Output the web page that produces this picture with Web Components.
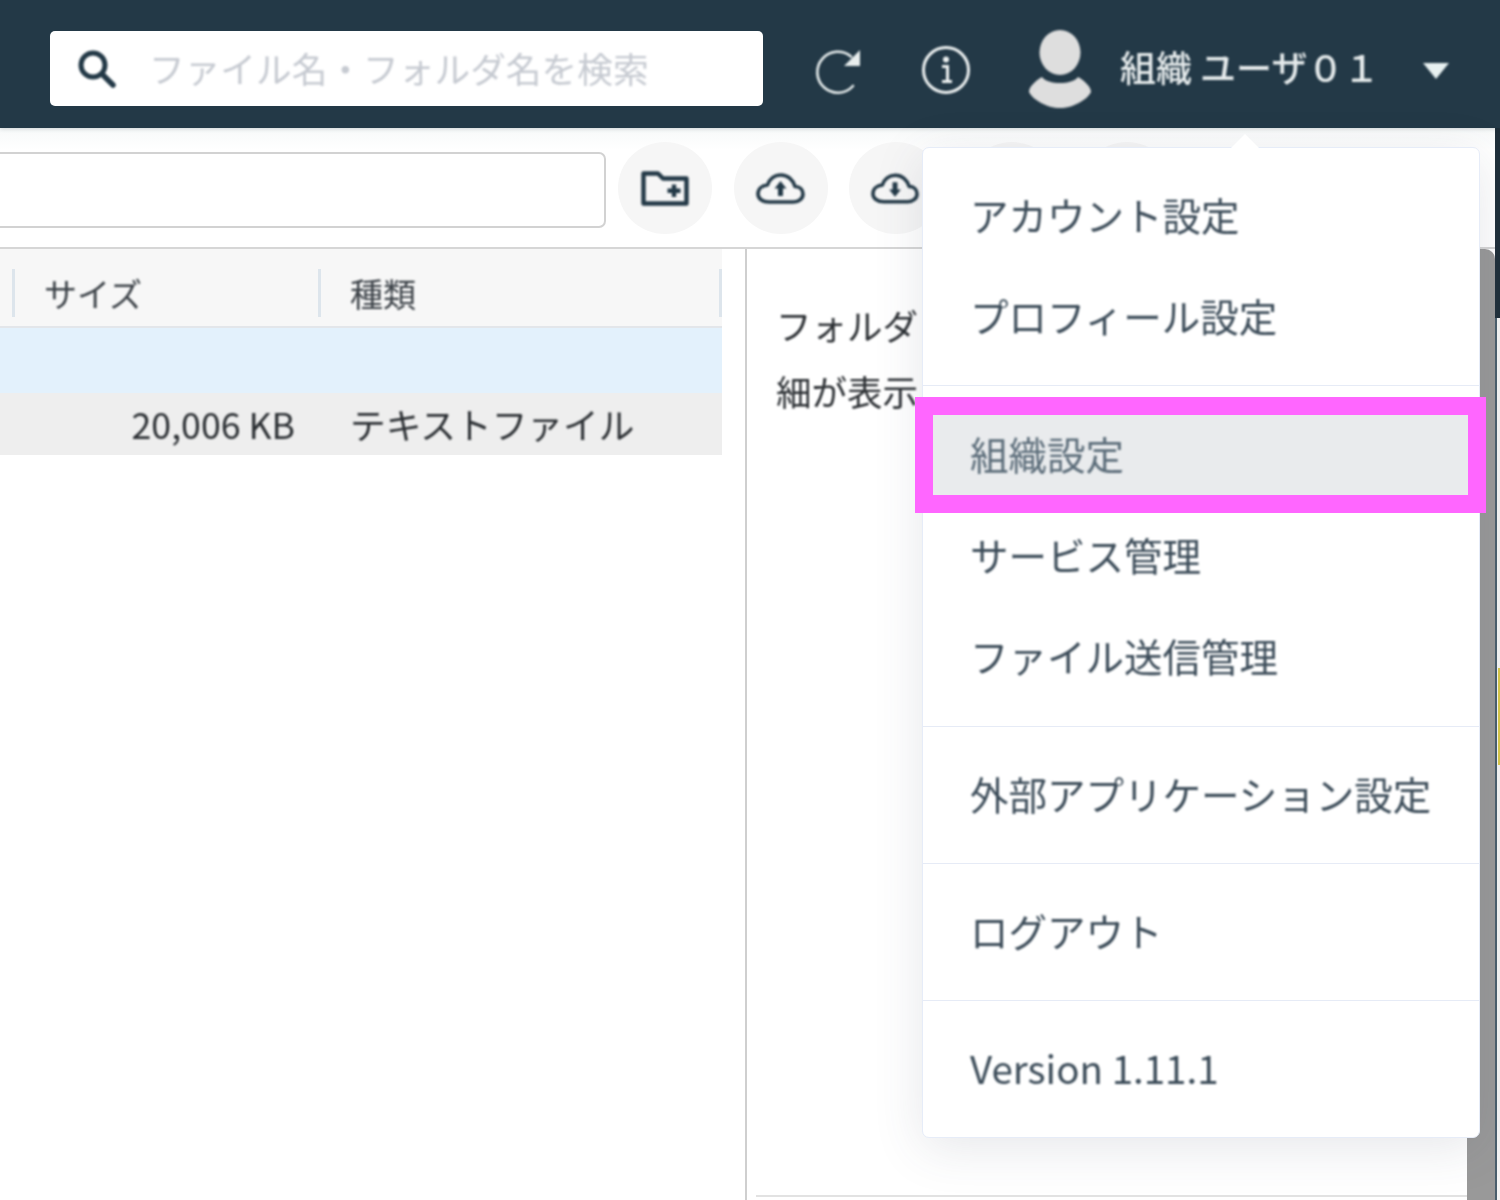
<!DOCTYPE html>
<html lang="ja">
<head>
<meta charset="utf-8">
<title>ファイル管理</title>
<style>
  html, body { margin: 0; height: 100%; overflow: hidden; background: #fff; }
  body { font-family: "Noto Sans CJK JP", "Noto Sans", sans-serif; color: #2b2f33; }
  #page { position: relative; width: 1500px; height: 1200px; overflow: hidden; }
</style>
</head>
<body>
<div id="page">
  <app-header user="組織 ユーザ０１"></app-header>
  <work-area>
    <tool-bar></tool-bar>
    <file-table></file-table>
    <detail-panel>フォルダ<br>細が表示</detail-panel>
  </work-area>
  <user-menu>
    <menu-group>
      <menu-item>アカウント設定</menu-item>
      <menu-item>プロフィール設定</menu-item>
    </menu-group>
    <menu-group wide>
      <menu-item highlighted>組織設定</menu-item>
      <menu-item>サービス管理</menu-item>
      <menu-item>ファイル送信管理</menu-item>
    </menu-group>
    <menu-group>
      <menu-item>外部アプリケーション設定</menu-item>
    </menu-group>
    <menu-group>
      <menu-item>ログアウト</menu-item>
    </menu-group>
    <menu-group>
      <menu-item>Version 1.11.1</menu-item>
    </menu-group>
  </user-menu>
</div>

<script>
// the reference is an upscaled capture, so text and icons are soft but boxes stay crisp
const SOFT = "filter: blur(0.9px);";

class AppHeader extends HTMLElement {
  constructor() {
    super();
    this.attachShadow({ mode: "open" });
    this.shadowRoot.innerHTML = `
      <style>
        :host {
          display: flex;
          align-items: center;
          box-sizing: border-box;
          height: 128px;
          padding-top: 9px;
          background: #233947;
          box-shadow: 0 1px 4px rgba(30, 50, 60, .18);
          position: relative;
          z-index: 1;
        }
        .search {
          display: flex;
          align-items: center;
          box-sizing: border-box;
          width: 713px;
          height: 75px;
          margin-left: 50px;
          padding-left: 27px;
          background: #fff;
          border-radius: 5px;
        }
        .search span {
          margin: -3px 0 0 32px;
          font-size: 35.7px;
          color: #c6cad1;
          white-space: nowrap;
          ${SOFT}
        }
        .refresh { margin-left: 52px; margin-top: 4px; }
        .info { margin-left: 59px; margin-top: 3px; }
        .avatar { margin-left: 59px; }
        .name {
          margin: -5px 0 0 29px;
          font-size: 36px;
          font-weight: 500;
          color: #e6ebec;
          white-space: nowrap;
          ${SOFT}
        }
        .caret { margin: 4px 51px 0 auto; }
        svg { display: block; flex: none; ${SOFT} }
      </style>
      <div class="search">
        <svg width="40" height="40" viewBox="0 0 40 40" fill="none" stroke="#233947">
          <circle cx="16" cy="16" r="12" stroke-width="5"/>
          <line x1="25" y1="25" x2="36" y2="36" stroke-width="5.5" stroke-linecap="round"/>
        </svg>
        <span>ファイル名・フォルダ名を検索</span>
      </div>
      <svg class="refresh" width="48" height="48" viewBox="0 0 48 48" fill="none">
        <path d="M36 9.5A20.5 20.5 0 1 0 38 39" stroke="#e8eeee" stroke-width="2.6" stroke-linecap="round"/>
        <path d="M45 3V19H29Z" fill="#e8eeee"/>
      </svg>
      <svg class="info" width="48" height="50" viewBox="0 0 48 50" fill="none">
        <circle cx="24" cy="25" r="22.5" stroke="#eef2f2" stroke-width="3"/>
        <circle cx="24" cy="14.5" r="3" fill="#eef2f2"/>
        <path d="M20 21.5H25.5V36M20 36.5H30" stroke="#eef2f2" stroke-width="3"/>
      </svg>
      <svg class="avatar" width="62" height="78" viewBox="0 0 62 78">
        <ellipse cx="31" cy="22.5" rx="20.5" ry="22.5" fill="#dedede"/>
        <path fill="#dedede" d="M13 47C19 55 43 55 49 47C56 51 62 57 62 62C58 70 44 78 31 78C18 78 4 70 0 62C0 57 6 51 13 47Z"/>
      </svg>
      <span class="name">${this.getAttribute("user")}</span>
      <svg class="caret" width="26" height="16" viewBox="0 0 26 16"><path d="M0 0H26L13 16Z" fill="#e8f1f1"/></svg>
    `;
  }
}

class WorkArea extends HTMLElement {
  constructor() {
    super();
    this.attachShadow({ mode: "open" });
    this.shadowRoot.innerHTML = `
      <style>
        :host {
          display: grid;
          grid-template-columns: 745px 722px 28px 5px;
          grid-template-rows: 121px 951px;
          height: 1072px;
        }
        ::slotted(tool-bar) { grid-column: 1 / 4; grid-row: 1; }
        ::slotted(file-table) { grid-column: 1; grid-row: 2; }
        ::slotted(detail-panel) { grid-column: 2; grid-row: 2; }
        .strip { grid-column: 3; grid-row: 2; background: #999; border-top-right-radius: 10px; }
        .edge { grid-column: 4; grid-row: 1 / 3; display: flex; flex-direction: column; }
        .edge .dark { height: 190px; background: #1f2f3a; flex: none; }
        .edge .line {
          flex: 1;
          display: flex;
          flex-direction: column;
          border-left: 2px solid #4a5e6c;
          background: #f4f4f4;
        }
        .edge .mark { height: 97px; margin: 350px 0 0 1px; background: #d8c94a; }
      </style>
      <slot></slot>
      <div class="strip"></div>
      <div class="edge">
        <div class="dark"></div>
        <div class="line"><div class="mark"></div></div>
      </div>
    `;
  }
}

class RoundButton extends HTMLElement {
  constructor() {
    super();
    this.attachShadow({ mode: "open" });
    this.shadowRoot.innerHTML = `
      <style>
        :host {
          display: flex;
          align-items: center;
          justify-content: center;
          flex: none;
          width: 94px;
          height: 92px;
          border-radius: 50%;
          background: #f6f6f6;
        }
      </style>
      <slot></slot>
    `;
  }
}

class ToolBar extends HTMLElement {
  constructor() {
    super();
    this.attachShadow({ mode: "open" });
    const stroke = 'fill="none" stroke="#233947" stroke-width="3.6" stroke-linejoin="round"';
    const cloud = "M13 29H37.5C43 29 47 25.5 47 21C47 16.5 43.5 13.5 39 13.5C37 6.5 31.5 2 25 2C18.5 2 13.5 6 11.5 12C6 12.5 2 16 2 21C2 25.5 6.5 29 13 29Z";
    this.shadowRoot.innerHTML = `
      <style>
        :host {
          display: flex;
          align-items: center;
          gap: 21.5px;
          box-sizing: border-box;
          height: 121px;
          padding-top: 1px;
          border-bottom: 2px solid #d6d6d6;
          background: linear-gradient(#f7f9f9, #fff 22px);
        }
        .path {
          flex: none;
          box-sizing: border-box;
          width: 616px;
          height: 76px;
          margin: 3px -9.5px 0 -10px;
          background: #fff;
          border: 2px solid #d2d2d2;
          border-radius: 7px;
        }
        svg { display: block; ${SOFT} }
        .down { margin-right: 3px; }
      </style>
      <div class="path"></div>
      <round-button>
        <svg width="48" height="36" viewBox="0 0 48 36" ${stroke}>
          <path d="M2.5 3.5H17L22 8.5H45.5V33.5H2.5Z" stroke-width="4.4"/>
          <path d="M33 14.5V27M26.5 20.7H39.5" stroke-width="4.4"/>
        </svg>
      </round-button>
      <round-button>
        <svg width="49" height="31" viewBox="0 0 49 31" ${stroke}>
          <path d="${cloud}"/>
          <path fill="#233947" stroke="none" d="M24.5 8L30.5 15.5H27V23H22V15.5H18.5Z"/>
        </svg>
      </round-button>
      <round-button>
        <svg class="down" width="48" height="31" viewBox="0 0 49 31" ${stroke}>
          <path d="${cloud}"/>
          <path fill="#233947" stroke="none" d="M24.5 24L30.5 16.5H27V9H22V16.5H18.5Z"/>
        </svg>
      </round-button>
      <round-button></round-button>
      <round-button></round-button>
    `;
  }
}

class FileTable extends HTMLElement {
  constructor() {
    super();
    this.attachShadow({ mode: "open" });
    this.shadowRoot.innerHTML = `
      <style>
        :host { display: block; width: 722px; }
        .row { display: grid; grid-template-columns: 15px 306px 401px; align-items: center; }
        .head {
          box-sizing: border-box;
          height: 79px;
          padding-bottom: 9px;
          align-items: end;
          background: #f7f7f7;
          border-bottom: 2px solid #e3e6ea;
          font-size: 33px;
          color: #3a4046;
        }
        .head div {
          display: flex;
          align-items: center;
          box-sizing: border-box;
          height: 48px;
          padding-left: 29px;
          border-right: 3px solid #dde5ec;
        }
        .selected { height: 65px; background: #e3f1fc; }
        .file {
          box-sizing: border-box;
          height: 62px;
          padding-bottom: 2px;
          background: #eee;
          font-size: 35.7px;
          color: #2b2f33;
        }
        .size { text-align: right; padding-right: 26px; white-space: nowrap; }
        .type { padding-left: 29px; white-space: nowrap; }
        span { ${SOFT} }
      </style>
      <div class="row head">
        <div style="padding:0"></div>
        <div><span>サイズ</span></div>
        <div><span>種類</span></div>
      </div>
      <div class="row selected"></div>
      <div class="row file">
        <i></i>
        <span class="size">20,006 KB</span>
        <span class="type">テキストファイル</span>
      </div>
    `;
  }
}

class DetailPanel extends HTMLElement {
  constructor() {
    super();
    this.attachShadow({ mode: "open" });
    this.shadowRoot.innerHTML = `
      <style>
        :host {
          display: block;
          box-sizing: border-box;
          border-left: 2px solid #cfcfcf;
          padding: 43px 0 0 29px;
          font-size: 35.5px;
          line-height: 66px;
          color: #2b2f33;
          white-space: nowrap;
          overflow: hidden;
          position: relative;
        }
        .text { ${SOFT} }
        .rule { position: absolute; left: 9px; right: 0; bottom: 3px; height: 2px; background: #e2e2e2; }
      </style>
      <div class="text"><slot></slot></div>
      <div class="rule"></div>
    `;
  }
}

class UserMenu extends HTMLElement {
  constructor() {
    super();
    this.attachShadow({ mode: "open" });
    this.shadowRoot.innerHTML = `
      <style>
        :host {
          position: absolute;
          left: 922px;
          top: 147px;
          width: 558px;
          box-sizing: border-box;
          background: #fff;
          border: 1px solid #e6ecf8;
          border-radius: 7px;
          box-shadow: 0 10px 50px rgba(60, 70, 90, .13);
          z-index: 5;
        }
        .arrow {
          position: absolute;
          left: 308px;
          top: -14px;
          width: 0;
          height: 0;
          border-left: 14px solid transparent;
          border-right: 14px solid transparent;
          border-bottom: 14px solid #fff;
        }
      </style>
      <div class="arrow"></div>
      <slot></slot>
    `;
  }
}

class MenuGroup extends HTMLElement {
  constructor() {
    super();
    this.attachShadow({ mode: "open" });
    this.shadowRoot.innerHTML = `
      <style>
        :host {
          display: block;
          padding: 18px 0 17px;
          border-bottom: 1px solid #e6ebf6;
        }
        :host([wide]) { padding: 19px 0 18px; }
        :host(:last-child) { border-bottom: 0; }
      </style>
      <slot></slot>
    `;
  }
}

class MenuItem extends HTMLElement {
  constructor() {
    super();
    this.attachShadow({ mode: "open" });
    this.shadowRoot.innerHTML = `
      <style>
        :host {
          display: flex;
          align-items: center;
          box-sizing: border-box;
          height: 101px;
          padding: 0 0 5px 47px;
          font-size: 38.5px;
          color: #3c4c59;
          white-space: nowrap;
          position: relative;
        }
        :host([highlighted]) { color: #5b6c79; }
        :host([highlighted]) .mark {
          position: absolute;
          left: -8px;
          right: -7px;
          top: -8px;
          bottom: -7px;
          border: 18px solid #ff66ff;
          background: #e9ebed;
        }
        span { position: relative; ${SOFT} }
      </style>
      <div class="mark"></div>
      <span><slot></slot></span>
    `;
  }
}

customElements.define("app-header", AppHeader);
customElements.define("work-area", WorkArea);
customElements.define("round-button", RoundButton);
customElements.define("tool-bar", ToolBar);
customElements.define("file-table", FileTable);
customElements.define("detail-panel", DetailPanel);
customElements.define("user-menu", UserMenu);
customElements.define("menu-group", MenuGroup);
customElements.define("menu-item", MenuItem);
</script>
</body>
</html>
